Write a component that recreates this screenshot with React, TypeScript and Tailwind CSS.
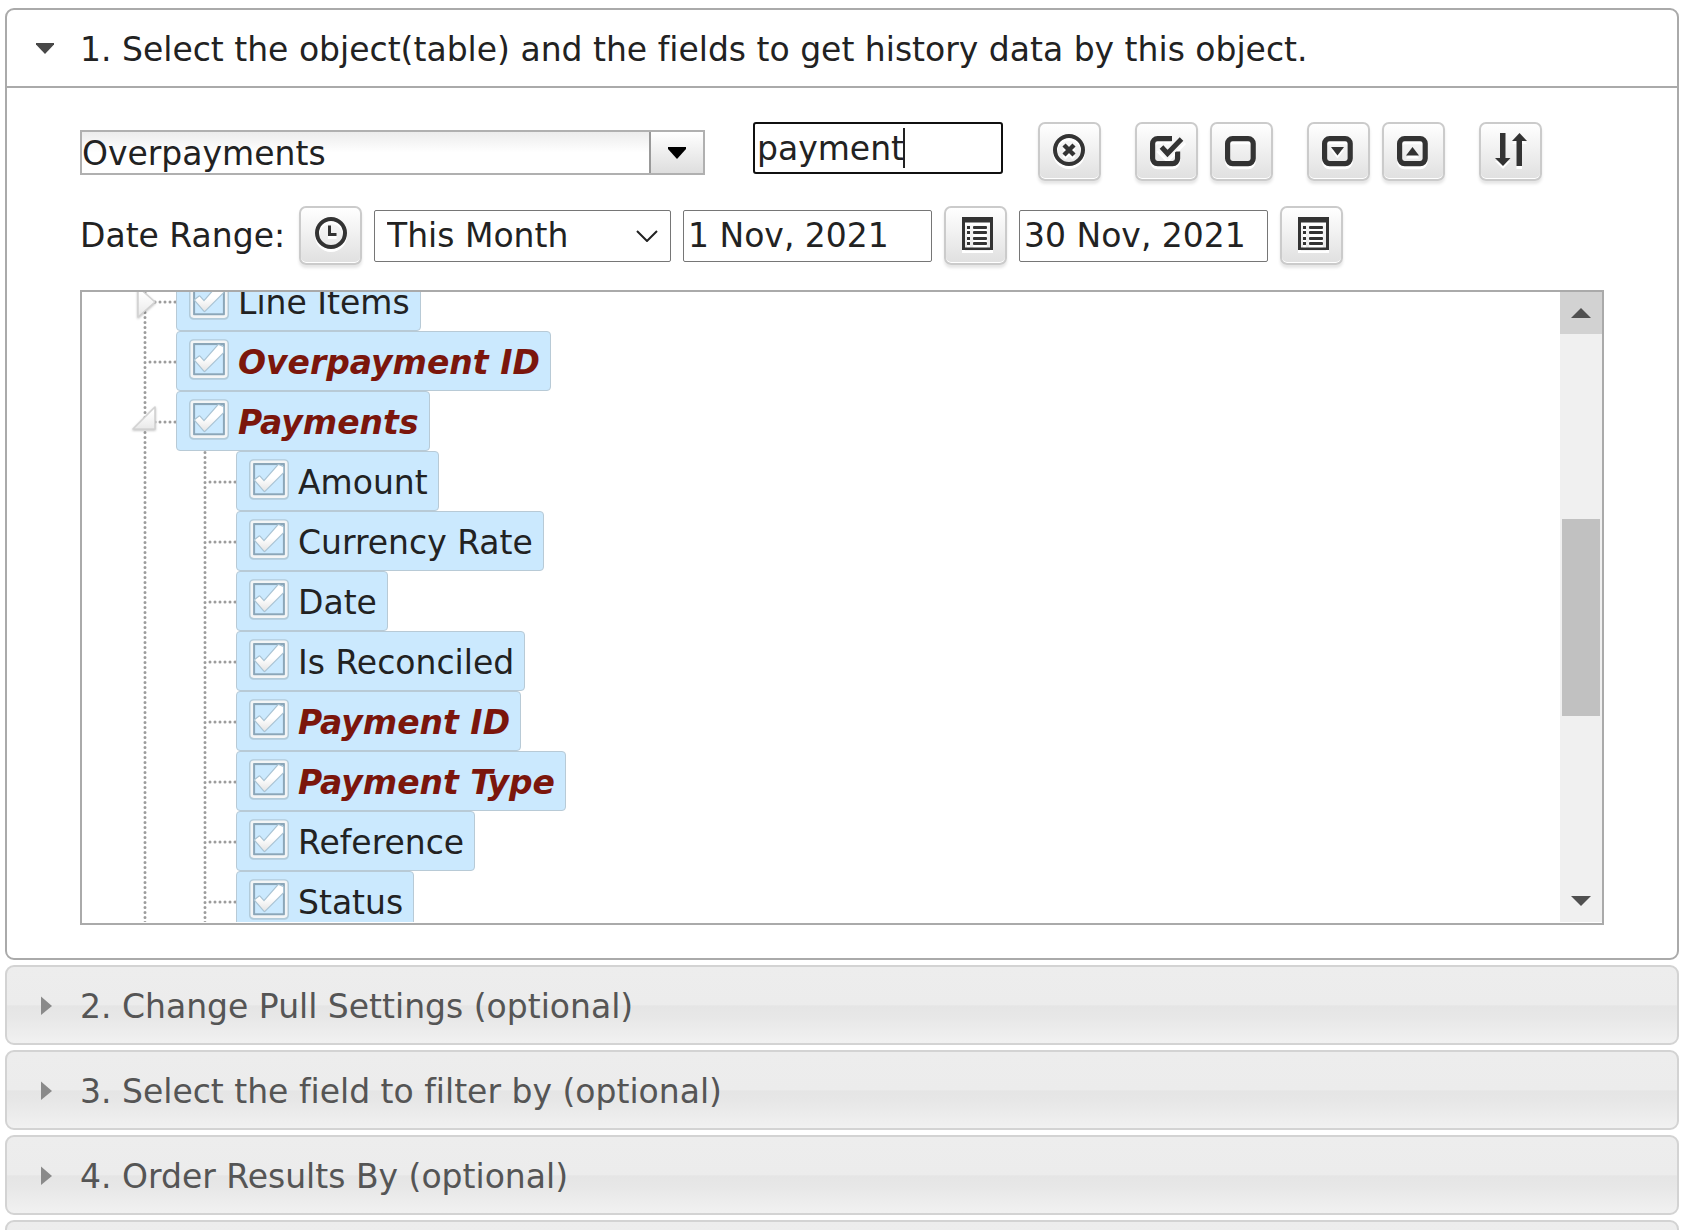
import type { ReactNode } from "react";

const INK = "#333333";

function IconButton({ label, children }: { label: string; children: ReactNode }) {
  return (
    <button
      type="button"
      aria-label={label}
      className="flex h-[59px] w-[63px] shrink-0 items-center justify-center rounded-[7px] border-2 border-[#cbcbcb] bg-linear-to-b from-white to-[#e0e0e0] shadow-[inset_0_-1px_0_#ffffff,0_3px_3px_rgba(0,0,0,0.1)]"
    >
      <svg
        viewBox="2 2 59 55"
        className="h-[55px] w-[59px] shrink-0 drop-shadow-[0_3px_0_#ffffff]"
        fill="none"
        stroke={INK}
        aria-hidden="true"
      >
        {children}
      </svg>
    </button>
  );
}

const ListIcon = () => (
  <g stroke="none" fill={INK}>
    <path fillRule="evenodd" d="M18 11h31v33H18zM21 16.500v25h25v-25z" />
    {[20, 25, 31, 36].map((y) => (
      <g key={y}>
        <rect x="23" y={y} width="3" height="3" />
        <rect x="29" y={y} width="14" height="3" rx="1" />
      </g>
    ))}
  </g>
);

const RoundedBox = () => <rect x="17.6" y="16.6" width="25.6" height="25" rx="5" strokeWidth="5.2" />;

type Field = { name: string; level: 1 | 2; match?: boolean; node?: "open" | "closed" };

const fields: Field[] = [
  { name: "Line Items", level: 1, node: "closed" },
  { name: "Overpayment ID", level: 1, match: true },
  { name: "Payments", level: 1, match: true, node: "open" },
  { name: "Amount", level: 2 },
  { name: "Currency Rate", level: 2 },
  { name: "Date", level: 2 },
  { name: "Is Reconciled", level: 2 },
  { name: "Payment ID", level: 2, match: true },
  { name: "Payment Type", level: 2, match: true },
  { name: "Reference", level: 2 },
  { name: "Status", level: 2 },
];

function Branch({ joined, node }: { joined?: boolean; node?: "open" | "closed" }) {
  return (
    <svg viewBox="0 0 60 60" className="size-[60px] shrink-0" fill="none" aria-hidden="true">
      <defs>
        <linearGradient id="node" x1="0" y1="0" x2="0" y2="1">
          <stop offset="0.2" stopColor="#ffffff" />
          <stop offset="1" stopColor="#e8e8e8" />
        </linearGradient>
      </defs>
      <g stroke="#9c9c9c" strokeWidth="3" strokeLinecap="round" strokeDasharray="0 5">
        <path d="M29 1.5V60" />
        {joined && <path d="M34 31H60" />}
      </g>
      {node && (
        <g strokeLinejoin="round" className="drop-shadow-[0_1px_1px_rgba(0,0,0,0.25)]">
          <path
            d={node === "closed" ? "M22 16 39 31 22 46Z" : "M39 16V38H17Z"}
            fill="url(#node)"
            stroke="#d2d2d2"
            strokeWidth="1.6"
          />
        </g>
      )}
    </svg>
  );
}

function CheckMark() {
  return (
    <svg
      viewBox="0 0 40 40"
      className="pointer-events-none col-start-1 row-start-1 size-10 overflow-visible"
      fill="none"
      aria-hidden="true"
    >
      <defs>
        <linearGradient id="tick" x1="0" y1="0" x2="0" y2="1">
          <stop offset="0.5" stopColor="#ffffff" />
          <stop offset="1" stopColor="#e4e4e4" />
        </linearGradient>
      </defs>
      <rect x="1.5" y="1.8" width="37" height="37.400" rx="3" stroke="#a9c0ce" strokeWidth="3" opacity="0.75" />
      <rect x="4.800" y="4.800" width="30.400" height="30.800" stroke="#8ba6b8" strokeWidth="2.6" />
      <rect x="2.8" y="2.8" width="34.4" height="34.800" rx="2" stroke="#f3f5f6" strokeWidth="2.6" />
      <path
        d="M6 21 10.500 17.500 15 22.500 29.500 6 34 8V13.500L15.500 32Z"
        fill="none"
        stroke="#a9c3d3"
        strokeWidth="2.4"
        strokeLinejoin="round"
      />
      <path d="M6 21 10.500 17.500 15 22.500 29.500 6 34 8V13.500L15.500 32Z" fill="url(#tick)" />
    </svg>
  );
}

function FieldRow({ field }: { field: Field }) {
  return (
    <li className="flex">
      {field.level === 2 && <Branch />}
      <Branch joined node={field.node} />
      <label className="flex h-[60px] items-start gap-[9px] rounded-[4px] border border-[#b8cad6] bg-[#cbe9fe] pt-[7px] pr-[10px] pl-3">
        <span className="grid">
          <input type="checkbox" defaultChecked className="col-start-1 row-start-1 size-10 appearance-none" />
          <CheckMark />
        </span>
        <span
          className={
            field.match
              ? "pt-1 leading-10 font-bold whitespace-nowrap text-[#7b160c] italic"
              : "pt-1 leading-10 whitespace-nowrap"
          }
        >
          {field.name}
        </span>
      </label>
    </li>
  );
}

function CollapsedSection({ title }: { title: string }) {
  return (
    <button
      type="button"
      aria-expanded="false"
      className="flex h-20 w-full shrink-0 items-center gap-[26px] rounded-[9px] border-2 border-[#d3d3d3] bg-[linear-gradient(#ededed_0%,#ececec_50%,#e5e5e5_51%,#e7e7e7_65%,#f1f1f1_100%)] pl-[29px] text-left text-[#555555]"
    >
      <svg viewBox="0 0 18 20" className="h-5 w-[18px] shrink-0" aria-hidden="true">
        <path d="M5 1.500 16 11 5 20Z" fill="#8a8a8a" />
      </svg>
      <span className="pt-[3px] leading-10">{title}</span>
    </button>
  );
}

const dateInput = "h-[52px] w-[249px] rounded-[2px] border border-[#767676] bg-white px-1 outline-none";

export default function App() {
  return (
    <main className="flex h-screen flex-col gap-[5px] overflow-hidden bg-white pt-2 pr-[6px] pl-[5px] font-['DejaVu_Sans',Verdana,sans-serif] text-[33px] text-[#222222] [font-variant-ligatures:none]">
      <section className="shrink-0 rounded-[9px] border-2 border-[#aaaaaa] bg-white">
        <button
          type="button"
          aria-expanded="true"
          className="flex h-[78px] w-full items-center gap-[26px] border-b-2 border-[#aaaaaa] pl-[29px] text-left"
        >
          <svg viewBox="0 0 18 20" className="h-5 w-[18px] shrink-0" aria-hidden="true">
            <path d="M0 5V6.500L9 16 18 6.500V5Z" fill="#484848" />
          </svg>
          <span className="pt-[3px] leading-10">
            1. Select the object(table) and the fields to get history data by this object.
          </span>
        </button>

        <div className="flex flex-col gap-[25px] px-[73px] pt-[34px] pb-[33px]">
          <div className="flex items-start">
            <div className="mt-2 flex h-[45px] w-[625px] border-2 border-[#b0b0b0] bg-linear-to-b from-[#ececec] to-white to-50%">
              <input
                aria-label="Object"
                defaultValue="Overpayments"
                className="min-w-0 flex-1 pt-[2px] outline-none"
              />
              <button
                type="button"
                aria-label="Show objects"
                className="flex w-[54px] items-center justify-center border-l-2 border-[#999999] bg-linear-to-b from-white to-[#dedede]"
              >
                <svg viewBox="0 0 18 12" className="h-3 w-[18px]" aria-hidden="true">
                  <path d="M0 0H18V2L9 12 0 2Z" fill="#000000" />
                </svg>
              </button>
            </div>

            <div className="relative ml-12">
              <input
                aria-label="Search fields"
                defaultValue="payment"
                className="h-[52px] w-[250px] rounded-[3px] border-2 border-[#101010] bg-white px-[2px] outline-none"
              />
              <span className="absolute top-[6px] left-[150px] h-10 w-[2px] bg-[#222222]" />
            </div>

            <div className="ml-[35px] flex gap-[34px]">
              <IconButton label="Clear search">
                <circle cx="31" cy="28" r="14" strokeWidth="4" />
                <path d="M26 23l10 10M36 23l-10 10" strokeWidth="4.400" />
              </IconButton>
              <div className="flex gap-3">
                <IconButton label="Select all">
                  <path
                    d="M37 16.600H22.600a5 5 0 0 0-5 5V36.600a5 5 0 0 0 5 5H37.600a5 5 0 0 0 5-5V29.500"
                    strokeWidth="5.200"
                  />
                  <path d="M25 23.500 32.500 31 47.500 15.500" stroke="#f6f6f6" strokeWidth="10" />
                  <path d="M26.500 25 32.500 31.500 46.500 17" strokeWidth="5" />
                </IconButton>
                <IconButton label="Clear selection">
                  <RoundedBox />
                </IconButton>
              </div>
              <div className="flex gap-3">
                <IconButton label="Expand all">
                  <RoundedBox />
                  <path d="M24 25H37L30.500 33.500Z" fill={INK} stroke="none" />
                </IconButton>
                <IconButton label="Collapse all">
                  <RoundedBox />
                  <path d="M24 33.500H37L30.500 25Z" fill={INK} stroke="none" />
                </IconButton>
              </div>
              <IconButton label="Sort fields">
                <path d="M21 11H26.500V36H31.500L24 44 16 36H21Z" fill={INK} stroke="none" />
                <path d="M37.500 44H43V19H48L40.500 11 33 19H37.500Z" fill={INK} stroke="none" />
              </IconButton>
            </div>
          </div>

          <div className="flex items-center gap-3">
            <label htmlFor="range" className="w-[207px] leading-10 whitespace-nowrap">
              Date Range:
            </label>
            <IconButton label="Time">
              <circle cx="32" cy="27" r="14" strokeWidth="4" />
              <path d="M30.500 19.500V28.500H37.500" strokeWidth="3" />
            </IconButton>
            <div className="relative">
              <select
                id="range"
                defaultValue="This Month"
                className="h-[52px] w-[297px] appearance-none rounded-[2px] border border-[#767676] bg-white pl-3 outline-none"
              >
                <option>This Month</option>
              </select>
              <svg
                viewBox="0 0 22 12"
                className="pointer-events-none absolute top-5 right-[13px] h-3 w-[22px]"
                fill="none"
                aria-hidden="true"
              >
                <path d="M1 1 11 11 21 1" stroke="#222222" strokeWidth="2" />
              </svg>
            </div>
            <input aria-label="Start date" defaultValue="1 Nov, 2021" className={dateInput} />
            <IconButton label="Pick start date">
              <ListIcon />
            </IconButton>
            <input aria-label="End date" defaultValue="30 Nov, 2021" className={dateInput} />
            <IconButton label="Pick end date">
              <ListIcon />
            </IconButton>
          </div>

          <div className="flex h-[635px] border-2 border-[#aaaaaa] bg-white pb-px">
            <div className="min-w-0 flex-1 overflow-hidden">
              <ul className="-mt-[21px] pl-[34px]">
                {fields.map((field) => (
                  <FieldRow key={field.name} field={field} />
                ))}
              </ul>
            </div>
            <div className="flex w-[42px] shrink-0 flex-col bg-[#f0f0f0]">
              <button type="button" aria-label="Scroll up" className="flex h-[42px] items-center justify-center bg-[#d2d2d2]">
                <svg viewBox="0 0 20 10" className="h-[10px] w-5" aria-hidden="true">
                  <path d="M0 10 10 0 20 10Z" fill="#505050" />
                </svg>
              </button>
              <div className="flex-1 px-[2px] pt-[185px]">
                <div className="h-[197px] bg-[#c1c1c1]" />
              </div>
              <button type="button" aria-label="Scroll down" className="flex h-[42px] items-center justify-center">
                <svg viewBox="0 0 20 10" className="h-[10px] w-5" aria-hidden="true">
                  <path d="M0 0 10 10 20 0Z" fill="#505050" />
                </svg>
              </button>
            </div>
          </div>
        </div>
      </section>

      <CollapsedSection title="2. Change Pull Settings (optional)" />
      <CollapsedSection title="3. Select the field to filter by (optional)" />
      <CollapsedSection title="4. Order Results By (optional)" />
      <CollapsedSection title="" />
    </main>
  );
}
